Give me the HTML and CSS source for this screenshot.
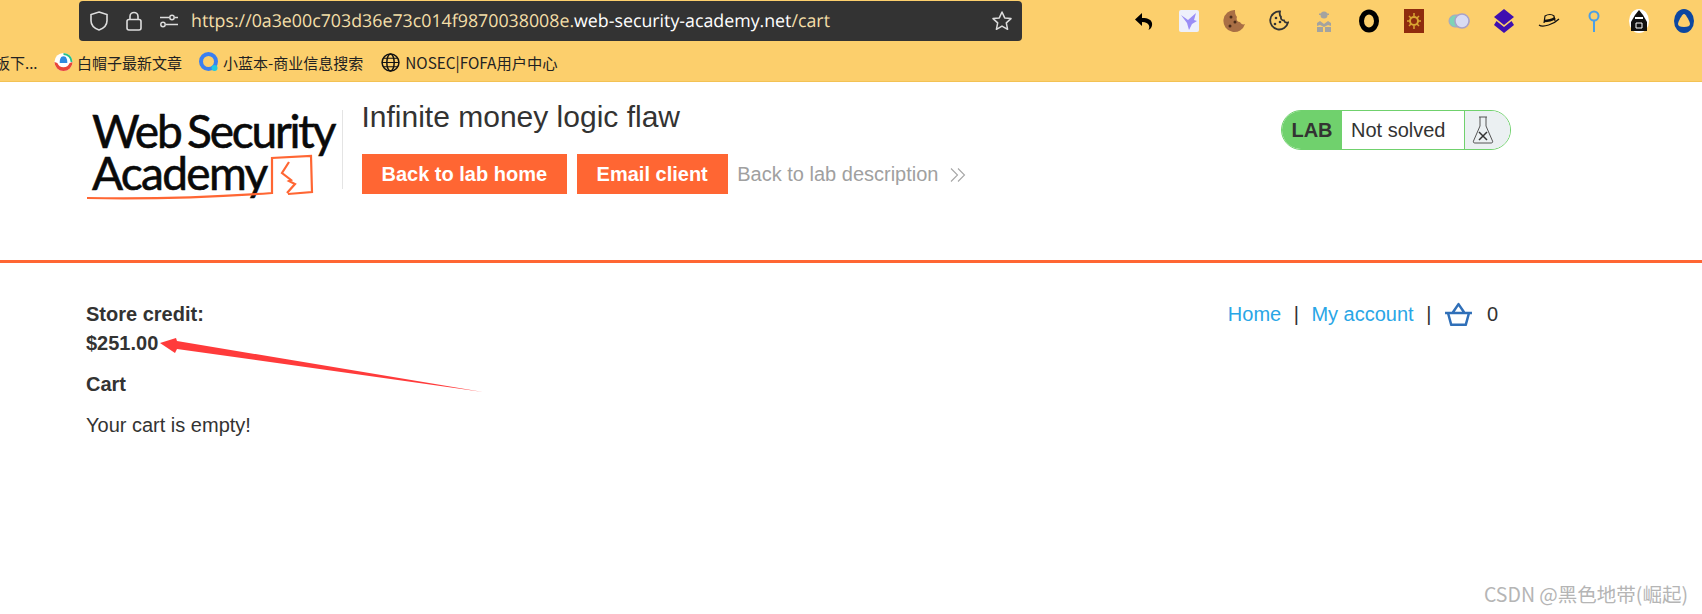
FILE: index.html
```html
<!DOCTYPE html>
<html lang="en">

<head>
    <meta charset="UTF-8">
    <meta name="viewport" content="width=device-width, initial-scale=1.0">
    <title>Infinite money logic flaw</title>
    <link rel="stylesheet" href="styles.css">
</head>

<body>
    <div class="browser-bar">
        <div class="top-row">
            <div class="url-bar">
                <svg class="url-icon" width="20" height="22" viewBox="0 0 20 22" fill="none" stroke="#ddd" stroke-width="1.6"><path d="M10 2l8 2.6v6.2c0 4.6-3.4 7.6-8 9.200-4.600-1.600-8-4.600-8-9.200V4.600z"/></svg>
                <svg class="url-icon" width="18" height="22" viewBox="0 0 18 22" fill="none" stroke="#ddd" stroke-width="1.6"><rect x="2" y="9.500" width="14" height="10.500" rx="2"/><path d="M5 9.500V6.500a4 4 0 0 1 8 0v3"/></svg>
                <svg class="url-icon" width="20" height="14" viewBox="0 0 20 14" fill="none" stroke="#ddd" stroke-width="1.500"><circle cx="13" cy="3.500" r="2.200"/><path d="M1 3.500h9M16 3.500h3"/><circle cx="4" cy="10.500" r="2.200"/><path d="M7 10.500h12"/></svg>
                <div class="url-text"><span class="url-dim">https://0a3e00c703d36e73c014f9870038008e.</span>web-security-academy.net<span class="url-dim">/cart</span></div>
                <svg class="url-star" width="22" height="22" viewBox="0 0 22 22" fill="none" stroke="#ddd" stroke-width="1.500" stroke-linejoin="round"><path d="M11 2l2.700 5.900 6.300.700-4.700 4.300 1.300 6.400L11 16.100l-5.600 3.200 1.300-6.400L2 8.600l6.300-.700z"/></svg>
            </div>
            <div class="ext-icons">
                <div class="ext"><svg width="20" height="22" viewBox="0 0 20 20"><path d="M8 2L1 8.500 8 15v-4c4 0 6 1.500 7 3.500.5 1.200.4 3-.5 4.500 3-1.500 4-4.500 3.500-7-.7-3-3.500-5-10-5z" fill="#000"/></svg></div>
                <div class="ext"><svg width="20" height="24" viewBox="0 0 20 24"><rect y="1" width="20" height="22" rx="2" fill="#eef0fb"/><path d="M2 6l7 5 8-7-2 7 3 1-5 3-3 6-2-7z" fill="#9a8df5"/></svg></div>
                <div class="ext"><svg width="22" height="24" viewBox="0 0 22 24"><path d="M12 1a11 11 0 1 0 10 14c-2 1-4 0-5-2-3 0-4-3-3-5-2-2-2-5-2-7z" fill="#a96f45"/><circle cx="8" cy="8" r="1.500" fill="#4a2c19"/><circle cx="12" cy="13" r="1.500" fill="#4a2c19"/><circle cx="7" cy="17" r="1.500" fill="#4a2c19"/></svg></div>
                <div class="ext"><svg width="20" height="22" viewBox="0 0 20 22" fill="none"><path d="M11 1.500a9 9 0 1 0 8 11c-2 .5-3.500-.5-4-2-2 0-3.500-1.500-3-3.500-1.500-1.500-1.500-3.500-1-5.500z" stroke="#333" stroke-width="1.800"/><circle cx="7" cy="8" r="1.300" fill="#333"/><circle cx="11" cy="12" r="1.300" fill="#333"/><circle cx="6" cy="14" r="1.300" fill="#333"/></svg></div>
                <div class="ext"><svg width="16" height="22" viewBox="0 0 16 22" fill="#a3a3a0"><circle cx="8" cy="5" r="3.500"/><rect x="3" y="3.500" width="10" height="1.500"/><path d="M1 13l3-2 4 3 4-3 3 2v3l-3-1-4 2-4-2-3 1z"/><path d="M1 22v-5h6v5zM9 22v-5h6v5z"/></svg></div>
                <div class="ext"><svg width="20" height="24" viewBox="0 0 20 24"><ellipse cx="10" cy="12" rx="7.500" ry="9" fill="none" stroke="#000" stroke-width="5"/></svg></div>
                <div class="ext"><svg width="20" height="24" viewBox="0 0 20 24"><rect width="20" height="24" y="0" fill="#8f2c0e"/><circle cx="10" cy="12" r="4" fill="none" stroke="#d9a532" stroke-width="2"/><path d="M10 4v3M10 17v3M3 12h3M14 12h3M5 7l2 2M13 15l2 2M15 7l-2 2M5 17l2-2" stroke="#d9a532" stroke-width="1.500"/></svg></div>
                <div class="ext"><svg width="22" height="16" viewBox="0 0 22 16"><rect x="1" y="2" width="20" height="12" rx="6" fill="#7ed3b6" stroke="#a9a2c8"/><circle cx="14" cy="8" r="7" fill="#d9dcf3" stroke="#a9a2c8" stroke-width="1.500"/></svg></div>
                <div class="ext"><svg width="20" height="24" viewBox="0 0 20 24" fill="#3f0fb0"><path d="M10 0l10 8-10 8L0 8z"/><path d="M2.500 12L10 18l7.500-6 2.500 4-10 8-10-8z"/></svg></div>
                <div class="ext"><svg width="22" height="16" viewBox="0 0 22 16" fill="none" stroke="#111" stroke-width="1.200"><path d="M1 12c4 3 15-1 20-6"/><path d="M6 10L7 3c3-2 7-2 9 0l1 5"/><path d="M6 8c4 0 8-1 11-3" stroke-width="2.500"/></svg></div>
                <div class="ext"><svg width="12" height="24" viewBox="0 0 12 24" fill="none" stroke="#4b9fe6" stroke-width="2"><circle cx="6" cy="7" r="4.500"/><path d="M6 11.500V23"/></svg></div>
                <div class="ext"><svg width="20" height="24" viewBox="0 0 20 24"><ellipse cx="10" cy="12" rx="10" ry="12" fill="#fff"/><path d="M10 1l4 5 4 7v9H2v-9l4-7z" fill="#111"/><path d="M6 8h8v2H6z" fill="#fff"/><path d="M7 14h6v5H7z" fill="none" stroke="#fff"/></svg></div>
                <div class="ext"><svg width="20" height="24" viewBox="0 0 20 24"><ellipse cx="10" cy="12" rx="10" ry="12" fill="#0b47a1"/><path d="M10 5c2 0 6 8 6 10 0 2-2 3-6 3s-6-1-6-3c0-2 4-10 6-10z" fill="#fccf6c"/></svg></div>
            </div>
        </div>
        <div class="bookmarks">
            <span class="bm-cut">板下...</span>
            <span class="bm bm-first">
                <svg width="19" height="20" viewBox="0 0 20 20"><circle cx="10" cy="10" r="9.500" fill="#fff"/><path d="M10 .5A9.500 9.500 0 0 1 19.500 10h-2A7.500 7.500 0 0 0 10 2.500z" fill="#27c08a"/><path d="M.5 10A9.500 9.500 0 0 0 19.500 10l-3 1a7 7 0 0 1-13 0z" fill="#e8463a"/><path d="M10 4c3 0 4 3 4 7H6c0-4 1-7 4-7z" fill="#2f8ae0"/></svg>
                白帽子最新文章
            </span>
            <span class="bm">
                <svg width="21" height="22" viewBox="0 0 20 22" fill="none"><circle cx="10" cy="10.500" r="7.500" stroke="#3b7ff0" stroke-width="4"/><circle cx="16" cy="17" r="3" fill="#22c8e0"/></svg>
                小蓝本-商业信息搜索
            </span>
            <span class="bm bm-last">
                <svg width="19" height="19" viewBox="0 0 18 18" fill="none" stroke="#111" stroke-width="1.400"><circle cx="9" cy="9" r="8"/><ellipse cx="9" cy="9" rx="3.500" ry="8"/><path d="M1 9h16M2 5h14M2 13h14" stroke-width="1.100"/></svg>
                NOSEC|FOFA用户中心
            </span>
        </div>
    </div>

    <div class="page">
        <div class="lab-header">
            <div class="logo">
                <div class="logo-text"><span class="logo-web">Web Security</span><br><span class="logo-academy">Academy</span></div>
                <svg class="logo-mark" width="240" height="90" viewBox="0 0 240 90" fill="none" stroke="#ff6633" stroke-width="2.200">
                    <path d="M0 84c60 1 130-1 185-5V44l39-2 1 36-24 2"/>
                    <path d="M202 48l-7 11 9 7-2 1 6 3-8 9"/>
                </svg>
            </div>
            <div class="title-col">
                <h2 class="lab-title">Infinite money logic flaw</h2>
                <div class="lab-links">
                    <a class="lab-btn">Back to lab home</a>
                    <a class="lab-btn">Email client</a>
                    <a class="lab-back">Back to lab description
                        <svg width="16" height="16" viewBox="0 0 16 16" fill="none" stroke="#a6a6a6" stroke-width="1.100"><path d="M1 1.500L7.500 8 1 14.500M8 1.500L14.500 8 8 14.500"/></svg>
                    </a>
                </div>
            </div>
            <div class="lab-status">
                <div class="status-lab">LAB</div>
                <div class="status-text">Not solved</div>
                <div class="status-icon">
                    <svg width="22" height="30" viewBox="0 0 22 30" fill="none" stroke="#555" stroke-width="1"><path d="M7 2h8M8 2v9L1.500 26c-.5 1.200 0 2 1.500 2h16c1.500 0 2-.8 1.500-2L14 11V2"/><path d="M7 17l8 8M15 17l-8 8" stroke="#333" stroke-width="1.500"/></svg>
                </div>
            </div>
        </div>

        <div class="content">
            <div class="top-line">
                <div class="credit">
                    <div>Store credit:</div>
                    <div>$251.00</div>
                </div>
                <div class="nav">
                    <a>Home</a>
                    <span class="sep">|</span>
                    <a>My account</a>
                    <span class="sep">|</span>
                    <svg width="29" height="25" viewBox="0 0 28 24" fill="none" stroke="#2f6fb8" stroke-width="2.400" stroke-linejoin="round"><path d="M1 10.500h26M4 11l3 11h14l3-11M8.500 10L14 2l5.500 8"/></svg>
                    <span class="count">0</span>
                </div>
            </div>
            <div class="cart-title">Cart</div>
            <p class="cart-empty">Your cart is empty!</p>
        </div>
    </div>

    <svg class="arrow" width="340" height="60" viewBox="0 0 340 60"><path d="M0 5L16 0 17 3 323 54 17 11 15 15z" fill="#ff3b3b"/></svg>
    <div class="watermark">CSDN @黑色地带(崛起)</div>
</body>
</html>
```

FILE: styles.css
```css
html, body {
    margin: 0;
    padding: 0;
}

body {
    width: 1702px;
    height: 614px;
    position: relative;
    overflow: hidden;
    background-color: #ffffff;
    color: #333332;
    font-family: "Liberation Sans", Arial, sans-serif;
    font-size: 20px;
}

.browser-bar {
    height: 81px;
    background-color: #fccf6c;
    border-bottom: 1px solid #f3c254;
    overflow: hidden;
}

.top-row {
    display: flex;
    height: 42px;
    padding-top: 1px;
    box-sizing: border-box;
}

.url-bar {
    width: 943px;
    height: 40px;
    margin-left: 79px;
    padding-left: 10px;
    padding-right: 9px;
    box-sizing: border-box;
    display: flex;
    align-items: center;
    background-color: #333333;
    border-radius: 4px;
    flex: none;
}

.url-icon {
    margin-right: 16px;
    flex: none;
}

.url-text {
    flex: 1;
    margin-left: -4px;
    font-family: "Open Sans", "Noto Sans", sans-serif;
    font-size: 17.800px;
    text-rendering: geometricPrecision;
    color: #ffffff;
    white-space: nowrap;
}

.url-dim {
    color: #f3dfa8;
}

.ext-icons {
    display: flex;
    margin-left: 99px;
}

.ext {
    width: 45px;
    height: 40px;
    display: flex;
    align-items: center;
    justify-content: center;
    flex: none;
}

.bookmarks {
    display: flex;
    align-items: center;
    height: 38px;
    margin-top: 1px;
    font-family: "Noto Sans CJK SC", "Noto Sans", sans-serif;
    font-size: 15px;
    color: #222222;
    white-space: nowrap;
}

.bm-cut {
    width: 54px;
    margin-left: -5px;
    flex: none;
}

.bm {
    display: flex;
    align-items: center;
    gap: 4px;
    margin-right: 14px;
}

.bm-first {
    margin-left: 5px;
    margin-right: 16px;
}

.bm-last {
    gap: 5px;
    margin-left: 4px;
    font-size: 15.300px;
}

.lab-header {
    height: 178px;
    display: flex;
    padding-left: 87px;
    padding-right: 191px;
    border-bottom: 3px solid #ff6633;
}

.logo {
    width: 255px;
    height: 79px;
    margin-top: 28px;
    position: relative;
    border-right: 1px solid #e4e4e4;
    flex: none;
}

.logo-text {
    font-family: Lato, "Open Sans", sans-serif;
    font-size: 46px;
    line-height: 42px;
    color: #0a0a0a;
    margin-left: 5px;
    white-space: nowrap;
    -webkit-text-stroke: 0.6px #0a0a0a;
}

.logo-web {
    letter-spacing: -2.200px;
    word-spacing: -3px;
}

.logo-academy {
    letter-spacing: -1.700px;
}

.logo-mark {
    position: absolute;
    left: 0;
    top: 4px;
}

.title-col {
    margin-left: 18.500px;
    flex: 1;
}

.lab-title {
    margin: 18px 0 0;
    font-size: 30px;
    line-height: 34px;
    font-weight: normal;
}

.lab-links {
    display: flex;
    align-items: center;
    margin-top: 20px;
}

.lab-btn {
    height: 40px;
    line-height: 40px;
    padding: 0 20px;
    margin-right: 9.500px;
    background-color: #ff6633;
    color: #ffffff;
    font-weight: bold;
}

.lab-back {
    color: #a0a0a0;
}

.lab-back svg {
    margin-left: 6px;
    vertical-align: -2px;
}

.lab-status {
    display: flex;
    width: 230px;
    height: 40px;
    margin-top: 28px;
    box-sizing: border-box;
    border: 1px solid #70d16d;
    border-radius: 20px;
    overflow: hidden;
    flex: none;
}

.status-lab {
    width: 60px;
    line-height: 38px;
    text-align: center;
    background-color: #70d16d;
    font-weight: bold;
    flex: none;
}

.status-text {
    flex: 1;
    line-height: 38px;
    padding-left: 9px;
}

.status-icon {
    width: 46px;
    display: flex;
    align-items: center;
    justify-content: flex-start;
    padding-left: 7px;
    box-sizing: border-box;
    background-color: #ebf0f2;
    border-left: 1px solid #70d16d;
    flex: none;
}

.content {
    padding: 37px 200px 0 86px;
}

.top-line {
    display: flex;
    justify-content: space-between;
}

.credit {
    font-weight: bold;
    line-height: 29px;
}

.nav {
    display: flex;
    align-items: center;
    height: 29px;
}

.nav a {
    color: #29a6e6;
}

.sep {
    margin: 0 12.500px;
}

.count {
    margin-left: 14px;
    margin-right: 4px;
}

.cart-title {
    margin-top: 12px;
    font-weight: bold;
    line-height: 29px;
}

.cart-empty {
    margin: 12px 0 0;
    line-height: 29px;
}

.arrow {
    position: absolute;
    left: 160px;
    top: 338px;
}

.watermark {
    position: absolute;
    right: 14px;
    top: 579px;
    font-family: "Noto Sans CJK SC", "Noto Sans", sans-serif;
    font-size: 19.500px;
    color: #b5b5b5;
    white-space: nowrap;
}
```
